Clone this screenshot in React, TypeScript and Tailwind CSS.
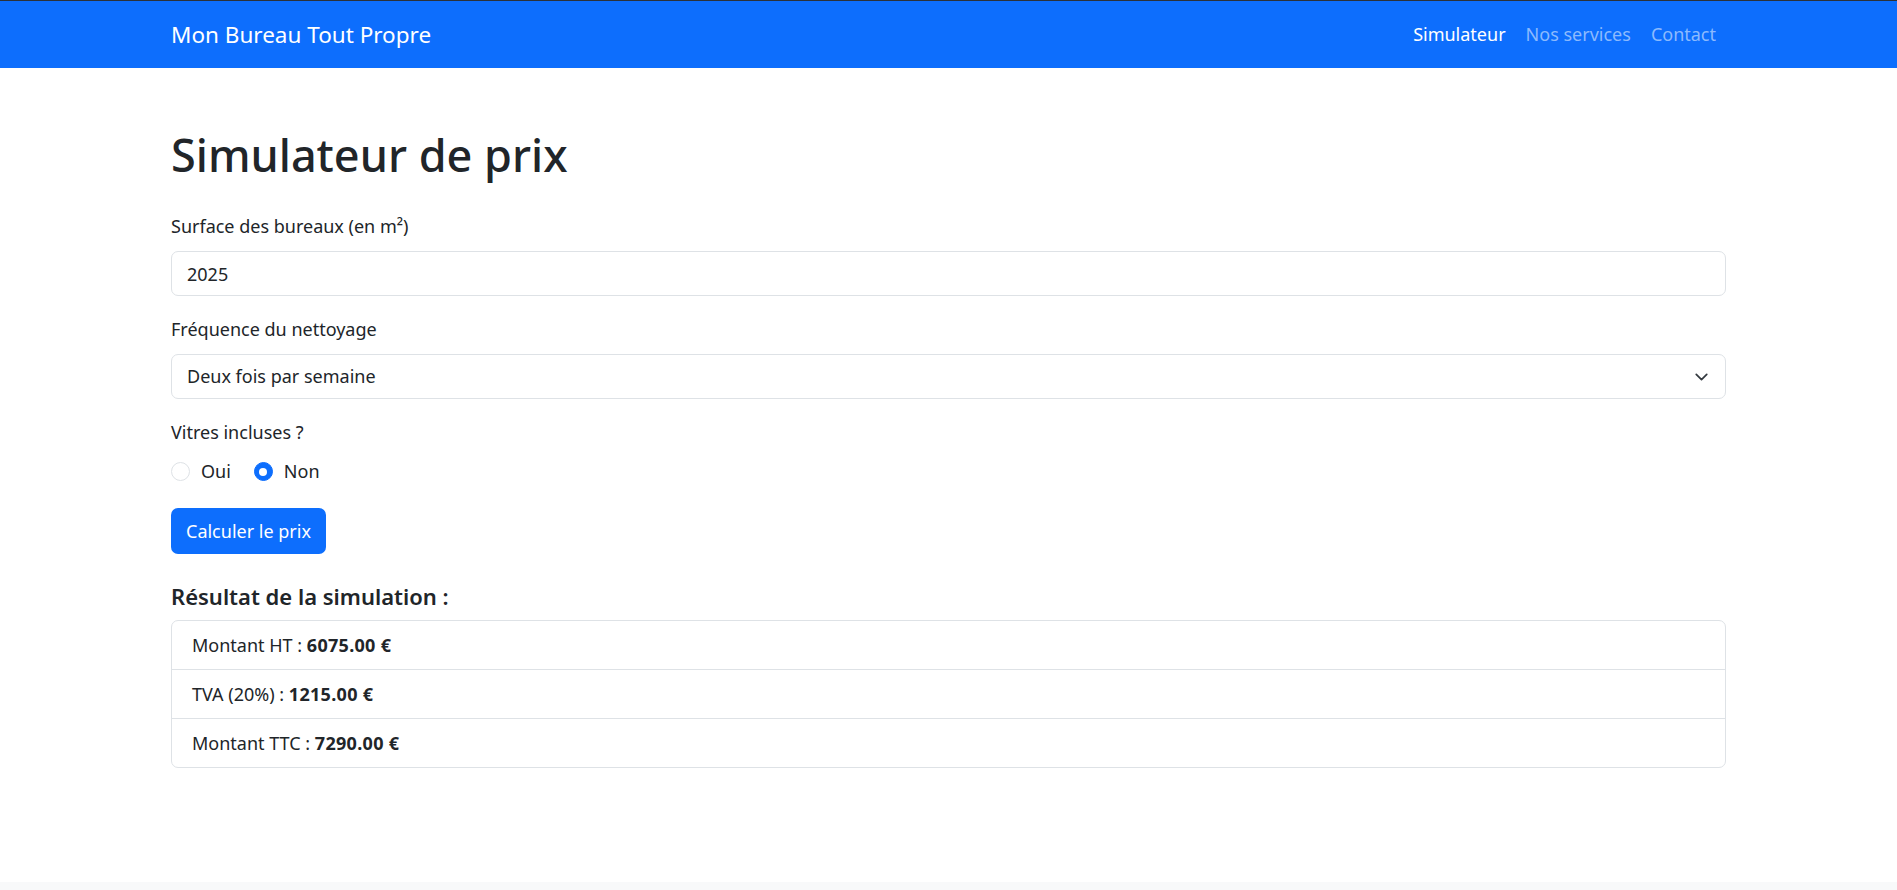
import { useState } from 'react';

const FONT = { fontFamily: '"Noto Sans", "Open Sans", Arial, sans-serif' };

export default function App() {
  const [surface, setSurface] = useState('2025');
  const [frequence, setFrequence] = useState('2');
  const [vitres, setVitres] = useState(false);

  const ht = 6075;
  const tva = 1215;
  const ttc = 7290;

  return (
    <div className="min-h-[890px] flex flex-col bg-white text-[#212529]" style={FONT}>
      {/* Navbar */}
      <nav className="h-[68px] border-t border-[#2b3138] bg-[#0d6efd]">
        <div className="mx-auto flex h-full w-[1555px] items-center justify-between">
          <span className="text-[22.5px] text-white">Mon Bureau Tout Propre</span>
          <ul className="flex items-center text-[18px]">
            <li className="px-[10px] text-white">Simulateur</li>
            <li className="px-[10px] text-[#8cbafe]">Nos services</li>
            <li className="px-[10px] text-[#8cbafe]">Contact</li>
          </ul>
        </div>
      </nav>

      <main className="mx-auto w-[1555px] flex-1 pt-[58px]">
        <h1 className="text-[45px] font-medium leading-[58px] mb-[28px]">Simulateur de prix</h1>

        <form className="text-[18px]" onSubmit={(e) => e.preventDefault()}>
          <div className="mb-[19px]">
            <label className="block leading-[29px] mb-[10px]">Surface des bureaux (en m²)</label>
            <input
              type="number"
              value={surface}
              onChange={(e) => setSurface(e.target.value)}
              className="block h-[45px] w-full rounded-[7px] border border-[#dee2e6] px-[15px] leading-[29px] outline-none"
            />
          </div>

          <div className="mb-[19px]">
            <label className="block leading-[29px] mb-[10px]">Fréquence du nettoyage</label>
            <div className="relative">
              <select
                value={frequence}
                onChange={(e) => setFrequence(e.target.value)}
                className="block h-[45px] w-full appearance-none rounded-[7px] border border-[#dee2e6] bg-white px-[15px] leading-[29px] outline-none"
              >
                <option value="1">Une fois par semaine</option>
                <option value="2">Deux fois par semaine</option>
                <option value="5">Tous les jours</option>
              </select>
              <svg
                className="pointer-events-none absolute right-[15px] top-1/2 -translate-y-1/2"
                width="19"
                height="14"
                viewBox="0 0 16 16"
                fill="none"
                stroke="#343a40"
                strokeWidth="2"
                strokeLinecap="round"
                strokeLinejoin="round"
              >
                <path d="m2 5 6 6 6-6" />
              </svg>
            </div>
          </div>

          <div className="mb-[19px]">
            <label className="block leading-[29px] mb-[10px]">Vitres incluses ?</label>
            <div className="flex items-center h-[29px]">
              <label className="flex items-center mr-[23px] cursor-pointer" onClick={() => setVitres(true)}>
                <span
                  className={`mr-[11px] h-[19px] w-[19px] rounded-full border flex items-center justify-center ${
                    vitres ? 'border-[#0d6efd] bg-[#0d6efd]' : 'border-[#dee2e6] bg-white'
                  }`}
                >
                  {vitres && <span className="h-[8px] w-[8px] rounded-full bg-white" />}
                </span>
                Oui
              </label>
              <label className="flex items-center cursor-pointer" onClick={() => setVitres(false)}>
                <span
                  className={`mr-[11px] h-[19px] w-[19px] rounded-full border flex items-center justify-center ${
                    !vitres ? 'border-[#0d6efd] bg-[#0d6efd]' : 'border-[#dee2e6] bg-white'
                  }`}
                >
                  {!vitres && <span className="h-[8px] w-[8px] rounded-full bg-white" />}
                </span>
                Non
              </label>
            </div>
          </div>

          <button
            type="submit"
            className="mt-[3px] h-[46px] rounded-[7px] bg-[#0d6efd] px-[15px] text-white"
          >
            Calculer le prix
          </button>
        </form>

        {/* Result */}
        <h5 className="mt-[28px] mb-[9px] text-[22px] font-semibold leading-[29px]">Résultat de la simulation :</h5>
        <ul className="rounded-[7px] border border-[#dee2e6] text-[18px]">
          <li className="h-[49px] flex items-center px-[20px] border-b border-[#dee2e6]">
            Montant HT :&nbsp;<strong className="font-bold tracking-[0.3px]">{ht.toFixed(2)} €</strong>
          </li>
          <li className="h-[49px] flex items-center px-[20px] border-b border-[#dee2e6]">
            TVA (20%) :&nbsp;<strong className="font-bold tracking-[0.3px]">{tva.toFixed(2)} €</strong>
          </li>
          <li className="h-[48px] flex items-center px-[20px]">
            Montant TTC :&nbsp;<strong className="font-bold tracking-[0.3px]">{ttc.toFixed(2)} €</strong>
          </li>
        </ul>
      </main>

      <footer className="h-[8px] bg-[#f8f9fa]" />
    </div>
  );
}
